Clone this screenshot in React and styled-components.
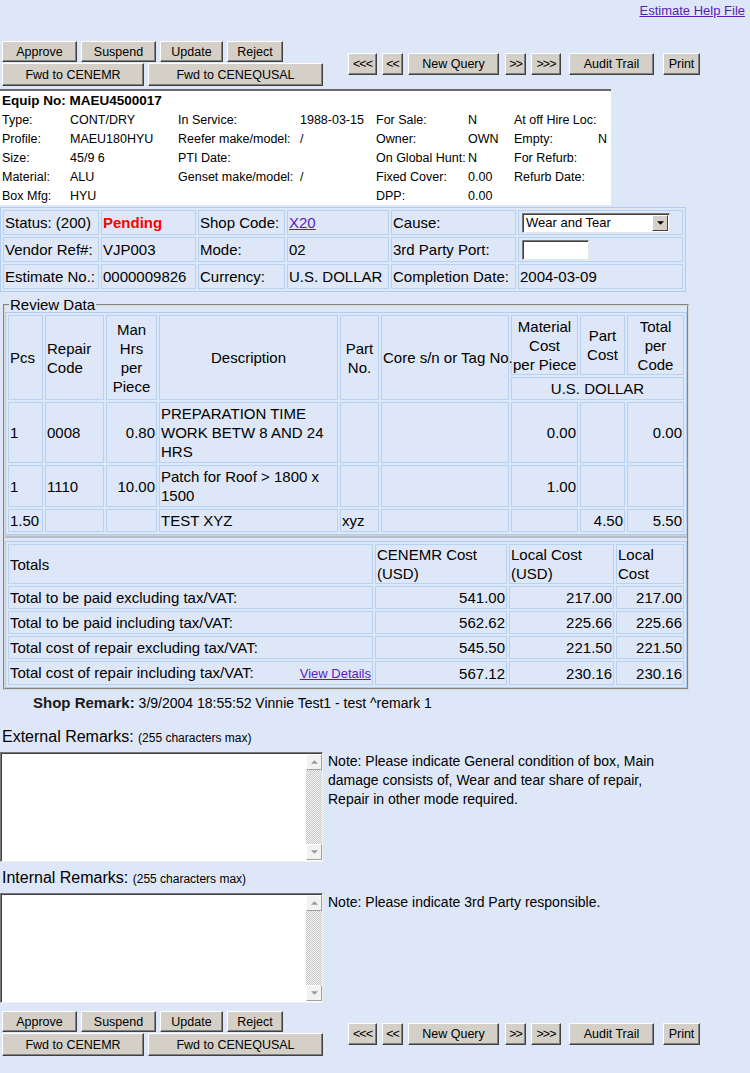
import React from 'react'
import styled, { createGlobalStyle } from 'styled-components'

const GlobalStyle = createGlobalStyle`
  html, body {
    margin: 0;
    padding: 0;
    background: #dee7f7;
  }
  body {
    font-family: "Liberation Sans", Arial, sans-serif;
    color: #000;
  }
`

const Page = styled.div`
  width: 750px;
  min-height: 1073px;
  background: #dee7f7;
`

const HelpBar = styled.div`
  height: 41px;
  box-sizing: border-box;
  padding: 3px 5px 0 0;
  text-align: right;
  font-size: 13px;
`

const Link = styled.a`
  color: #5a1db4;
  text-decoration: underline;
  cursor: pointer;
  font-size: ${p => p.$size || 'inherit'};
`

// ---- buttons ----
const ActionBar = styled.div`
  display: flex;
  align-items: center;
  height: 45px;
  padding-left: 2px;
  margin-top: ${p => p.$top || 0}px;
`

const ButtonStack = styled.div`
  display: flex;
  flex-direction: column;
  gap: 1px;
  width: 321px;
`

const ButtonRow = styled.div`
  display: flex;
  gap: 4px;
`

const NavGroup = styled.div`
  display: flex;
  margin-left: 25px;
`

const Button = styled.button`
  width: ${p => p.$w}px;
  height: ${p => p.$h || 22}px;
  margin: 0 0 0 ${p => p.$ml || 0}px;
  padding: 0;
  box-sizing: border-box;
  background: #d4d0c8;
  border: 1px solid;
  border-color: #ffffff #404040 #404040 #ffffff;
  box-shadow: inset -1px -1px #808080;
  font-family: "Liberation Sans", Arial, sans-serif;
  font-size: 12.5px;
  letter-spacing: ${p => (p.$arrows ? '-1px' : 'normal')};
  color: #000;
  white-space: nowrap;
`

function Actions({ top }) {
  return (
    <ActionBar $top={top}>
      <ButtonStack>
        <ButtonRow>
          <Button $w={75} $h={21}>Approve</Button>
          <Button $w={75} $h={21}>Suspend</Button>
          <Button $w={63} $h={21}>Update</Button>
          <Button $w={56} $h={21}>Reject</Button>
        </ButtonRow>
        <ButtonRow>
          <Button $w={142} $h={23}>Fwd to CENEMR</Button>
          <Button $w={175} $h={23}>Fwd to CENEQUSAL</Button>
        </ButtonRow>
      </ButtonStack>
      <NavGroup>
        <Button $w={29} $arrows>&lt;&lt;&lt;</Button>
        <Button $w={21} $ml={5} $arrows>&lt;&lt;</Button>
        <Button $w={91} $ml={5}>New Query</Button>
        <Button $w={21} $ml={6} $arrows>&gt;&gt;</Button>
        <Button $w={30} $ml={5} $arrows>&gt;&gt;&gt;</Button>
        <Button $w={85} $ml={8}>Audit Trail</Button>
        <Button $w={37} $ml={9}>Print</Button>
      </NavGroup>
    </ActionBar>
  )
}

// ---- equipment block ----
const EquipBox = styled.div`
  width: 611px;
  margin-top: 3px;
  background: #fff;
  border-top: 2px solid #6a6a6a;
  font-size: 12.5px;
`

const EquipGrid = styled.div`
  display: grid;
  grid-template-columns: 68px 108px 122px 76px 92px 46px 84px 13px;
  grid-auto-rows: 19px;
  align-items: center;
  padding-left: 2px;
  white-space: nowrap;
`

const EquipTitle = styled.div`
  grid-column: 1 / -1;
  font-weight: bold;
  font-size: 13.5px;
`

const equipRows = [
  ['Type:', 'CONT/DRY', 'In Service:', '1988-03-15', 'For Sale:', 'N', 'At off Hire Loc:', ''],
  ['Profile:', 'MAEU180HYU', 'Reefer make/model:', '/', 'Owner:', 'OWN', 'Empty:', 'N'],
  ['Size:', '45/9 6', 'PTI Date:', '', 'On Global Hunt:', 'N', 'For Refurb:', ''],
  ['Material:', 'ALU', 'Genset make/model:', '/', 'Fixed Cover:', '0.00', 'Refurb Date:', ''],
  ['Box Mfg:', 'HYU', '', '', 'DPP:', '0.00', '', ''],
]

// ---- status table ----
const InfoTable = styled.table`
  margin-top: 2px;
  width: 686px;
  table-layout: fixed;
  border: 1px solid #aecdef;
  border-spacing: 2px;
  font-size: 15px;
`

const InfoCell = styled.td`
  width: ${p => (p.$w ? `${p.$w}px` : 'auto')};
  height: 23px;
  padding: 0 1px;
  border: 1px solid #b4d2f2;
  white-space: nowrap;
  overflow: hidden;
`

const Pending = styled.span`
  color: #ff0000;
  font-weight: bold;
`

const SelectBox = styled.div`
  display: flex;
  align-items: center;
  width: 148px;
  height: 20px;
  margin-left: 2px;
  box-sizing: border-box;
  background: #fff;
  border: 1px solid;
  border-color: #7a7a7a #e8e8e8 #e8e8e8 #7a7a7a;
  box-shadow: inset 1px 1px #404040;
  font-size: 13px;
`

const SelectText = styled.span`
  flex: 1;
  padding-left: 3px;
`

const SelectArrow = styled.span`
  display: flex;
  align-items: center;
  justify-content: center;
  width: 16px;
  height: 16px;
  margin-right: 1px;
  box-sizing: border-box;
  background: #d4d0c8;
  border: 1px solid;
  border-color: #fff #404040 #404040 #fff;
`

const TextInput = styled.input`
  width: 67px;
  height: 20px;
  margin-left: 2px;
  box-sizing: border-box;
  border: 1px solid;
  border-color: #7a7a7a #e8e8e8 #e8e8e8 #7a7a7a;
  box-shadow: inset 1px 1px #404040;
  background: #fff;
  display: block;
`

// ---- review data ----
const Fieldset = styled.fieldset`
  width: 682px;
  margin: 5px 0 0 3px;
  padding: 0;
  border: 2px groove #d8d8d8;
`

const Legend = styled.legend`
  margin-left: 4px;
  padding: 0 1px;
  font-size: 15px;
  line-height: 15px;
`

const GridTable = styled.table`
  width: 682px;
  table-layout: fixed;
  border: 1px solid #aecdef;
  border-spacing: 2px;
  font-size: 15px;
  line-height: 19px;
`

const HeadCell = styled.td`
  width: ${p => (p.$w ? `${p.$w}px` : 'auto')};
  padding: 0 1px;
  border: 1px solid #b4d2f2;
  text-align: ${p => p.$align || 'center'};
  vertical-align: middle;
  white-space: ${p => (p.$nowrap ? 'nowrap' : 'normal')};
  height: ${p => (p.$h ? `${p.$h}px` : 'auto')};
`

const DataCell = styled.td`
  padding: 1px 1px;
  border: 1px solid #b4d2f2;
  text-align: ${p => p.$align || 'left'};
  vertical-align: middle;
  height: ${p => (p.$h ? `${p.$h}px` : 'auto')};
`

const Divider = styled.div`
  height: 2px;
  margin: 0 0 3px;
  background: #b6bec9;
  border-top: 1px solid #c9d0da;
`

const LabelWithLink = styled.div`
  display: flex;
  justify-content: space-between;
  align-items: baseline;
`

const reviewRows = [
  { h: 57, cells: ['1', '0008', '0.80', 'PREPARATION TIME WORK BETW 8 AND 24 HRS', '', '', '0.00', '', '0.00'] },
  { h: 38, cells: ['1', '1110', '10.00', 'Patch for Roof > 1800 x 1500', '', '', '1.00', '', ''] },
  { h: 19, cells: ['1.50', '', '', 'TEST XYZ', 'xyz', '', '', '4.50', '5.50'] },
]
const reviewAlign = ['left', 'left', 'right', 'left', 'left', 'left', 'right', 'right', 'right']

const totalRows = [
  ['Total to be paid excluding tax/VAT:', '541.00', '217.00', '217.00'],
  ['Total to be paid including tax/VAT:', '562.62', '225.66', '225.66'],
  ['Total cost of repair excluding tax/VAT:', '545.50', '221.50', '221.50'],
  ['Total cost of repair including tax/VAT:', '567.12', '230.16', '230.16'],
]

// ---- remarks ----
const ShopRemark = styled.div`
  margin-top: 4px;
  padding-left: 33px;
  font-size: 14px;
  line-height: 17px;
`

const ShopLabel = styled.span`
  font-size: 15px;
  font-weight: bold;
  color: #1a1a1a;
`

const RemarkLabel = styled.div`
  margin-top: ${p => p.$top}px;
  padding-left: 2px;
  font-size: 16px;
  line-height: 18px;
`

const Small = styled.span`
  font-size: 12px;
`

const RemarkRow = styled.div`
  display: flex;
  gap: 5px;
  margin-top: 5px;
`

const TextBox = styled.div`
  display: flex;
  width: 323px;
  height: 110px;
  box-sizing: border-box;
  background: #fff;
  border: 1px solid;
  border-color: #7a7a7a #f0f0f0 #f0f0f0 #7a7a7a;
  box-shadow: inset 1px 1px #404040;
`

const TextArea = styled.textarea`
  flex: 1;
  border: none;
  outline: none;
  resize: none;
  background: transparent;
  font-family: "Liberation Sans", Arial, sans-serif;
  font-size: 13px;
`

const ScrollBar = styled.div`
  display: flex;
  flex-direction: column;
  justify-content: space-between;
  width: 16px;
  margin: 1px 0;
  background-color: #eeeeee;
  background-image: repeating-conic-gradient(#c6c6c6 0 25%, #f6f6f6 0 50%);
  background-size: 2px 2px;
`

const ScrollArrow = styled.div`
  display: flex;
  align-items: center;
  justify-content: center;
  height: 16px;
  box-sizing: border-box;
  background: #f2f2f0;
  border: 1px solid;
  border-color: #ffffff #a0a0a0 #a0a0a0 #ffffff;
`

const Note = styled.div`
  font-size: 14px;
  line-height: 19px;
`

function Triangle({ down, color = '#000', size = 7 }) {
  return (
    <svg width={size} height={Math.ceil(size / 2)} viewBox="0 0 8 4">
      <path d={down ? 'M0 0 L8 0 L4 4 Z' : 'M0 4 L8 4 L4 0 Z'} fill={color} />
    </svg>
  )
}

function Remarks() {
  return (
    <TextBox>
      <TextArea />
      <ScrollBar>
        <ScrollArrow><Triangle color="#9a9a9a" /></ScrollArrow>
        <ScrollArrow><Triangle down color="#9a9a9a" /></ScrollArrow>
      </ScrollBar>
    </TextBox>
  )
}

export default function App() {
  return (
    <Page>
      <GlobalStyle />
      <HelpBar>
        <Link>Estimate Help File</Link>
      </HelpBar>

      <Actions />

      <EquipBox>
        <EquipGrid>
          <EquipTitle>Equip No: MAEU4500017</EquipTitle>
          {equipRows.map((row, i) =>
            row.map((cell, j) => <span key={`${i}-${j}`}>{cell}</span>)
          )}
        </EquipGrid>
      </EquipBox>

      <InfoTable>
        <tbody>
          <tr>
            <InfoCell $w={92}>Status: (200)</InfoCell>
            <InfoCell $w={91}><Pending>Pending</Pending></InfoCell>
            <InfoCell $w={83}>Shop Code:</InfoCell>
            <InfoCell $w={98}><Link>X20</Link></InfoCell>
            <InfoCell $w={121}>Cause:</InfoCell>
            <InfoCell $w={161}>
              <SelectBox>
                <SelectText>Wear and Tear</SelectText>
                <SelectArrow><Triangle down /></SelectArrow>
              </SelectBox>
            </InfoCell>
          </tr>
          <tr>
            <InfoCell>Vendor Ref#:</InfoCell>
            <InfoCell>VJP003</InfoCell>
            <InfoCell>Mode:</InfoCell>
            <InfoCell>02</InfoCell>
            <InfoCell>3rd Party Port:</InfoCell>
            <InfoCell><TextInput /></InfoCell>
          </tr>
          <tr>
            <InfoCell>Estimate No.:</InfoCell>
            <InfoCell>0000009826</InfoCell>
            <InfoCell>Currency:</InfoCell>
            <InfoCell>U.S. DOLLAR</InfoCell>
            <InfoCell>Completion Date:</InfoCell>
            <InfoCell>2004-03-09</InfoCell>
          </tr>
        </tbody>
      </InfoTable>

      <Fieldset>
        <Legend>Review Data</Legend>
        <GridTable>
          <tbody>
            <tr>
              <HeadCell $w={31} rowSpan={2} $align="left">Pcs</HeadCell>
              <HeadCell $w={55} rowSpan={2} $align="left">Repair Code</HeadCell>
              <HeadCell $w={47} rowSpan={2}>Man Hrs per Piece</HeadCell>
              <HeadCell $w={175} rowSpan={2}>Description</HeadCell>
              <HeadCell $w={35} rowSpan={2}>Part No.</HeadCell>
              <HeadCell $w={124} rowSpan={2} $nowrap>Core s/n or Tag No.</HeadCell>
              <HeadCell $w={63} $h={58} $nowrap>Material<br />Cost<br />per Piece</HeadCell>
              <HeadCell $w={41}>Part Cost</HeadCell>
              <HeadCell $w={53}>Total per Code</HeadCell>
            </tr>
            <tr>
              <HeadCell colSpan={3} $h={21}>U.S. DOLLAR</HeadCell>
            </tr>
            {reviewRows.map((row, i) => (
              <tr key={i}>
                {row.cells.map((c, j) => (
                  <DataCell key={j} $align={reviewAlign[j]} $h={row.h}>{c}</DataCell>
                ))}
              </tr>
            ))}
          </tbody>
        </GridTable>
        <Divider />
        <GridTable>
          <tbody>
            <tr>
              <HeadCell $w={361} $h={38} $align="left">Totals</HeadCell>
              <HeadCell $w={128} $align="left">CENEMR Cost<br />(USD)</HeadCell>
              <HeadCell $w={101} $align="left">Local Cost<br />(USD)</HeadCell>
              <HeadCell $w={64} $align="left">Local<br />Cost</HeadCell>
            </tr>
            {totalRows.map((row, i) => (
              <tr key={i}>
                <DataCell $h={19}>
                  {i === totalRows.length - 1 ? (
                    <LabelWithLink>
                      <span>{row[0]}</span>
                      <Link $size="13px">View Details</Link>
                    </LabelWithLink>
                  ) : row[0]}
                </DataCell>
                <DataCell $align="right">{row[1]}</DataCell>
                <DataCell $align="right">{row[2]}</DataCell>
                <DataCell $align="right">{row[3]}</DataCell>
              </tr>
            ))}
          </tbody>
        </GridTable>
      </Fieldset>

      <ShopRemark>
        <ShopLabel>Shop Remark:</ShopLabel> 3/9/2004 18:55:52 Vinnie Test1 - test ^remark 1
      </ShopRemark>

      <RemarkLabel $top={16}>
        External Remarks: <Small>(255 characters max)</Small>
      </RemarkLabel>
      <RemarkRow>
        <Remarks />
        <Note>
          Note: Please indicate General condition of box, Main<br />
          damage consists of, Wear and tear share of repair,<br />
          Repair in other mode required.
        </Note>
      </RemarkRow>

      <RemarkLabel $top={7}>
        Internal Remarks: <Small>(255 characters max)</Small>
      </RemarkLabel>
      <RemarkRow>
        <Remarks />
        <Note>Note: Please indicate 3rd Party responsible.</Note>
      </RemarkRow>

      <Actions top={8} />
    </Page>
  )
}
